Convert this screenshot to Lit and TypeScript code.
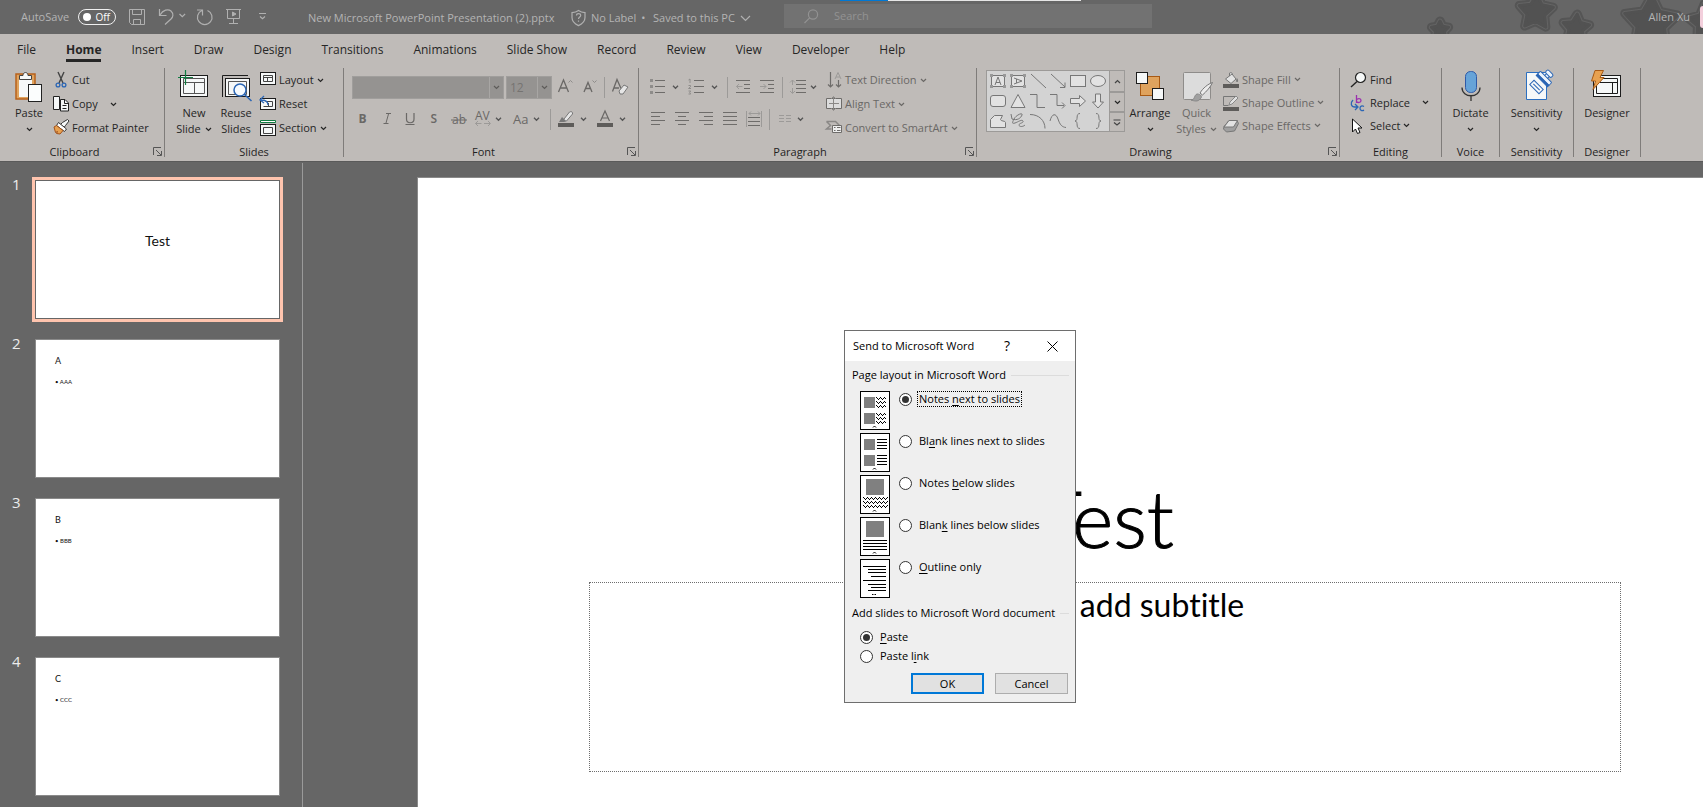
import { LitElement, html, css, svg, type TemplateResult, type SVGTemplateResult } from "lit";
import { customElement, state } from "lit/decorators.js";

/** Icon artwork shares one drawing board; each icon shows its own window of it. */
const art = (x: number, y: number, w: number, h: number, body: SVGTemplateResult): TemplateResult =>
  html`<svg width=${w} height=${h} viewBox="${x} ${y} ${w} ${h}" fill="none" aria-hidden="true">${body}</svg>`;

const chevron = html`<svg class="chev" width="7" height="5" viewBox="0 0 7 5" fill="none" stroke="currentColor" stroke-width="1.2" aria-hidden="true"><path d="M1 1l2.5 2.5L6 1" /></svg>`;

const launcher = html`<svg width="9" height="9" viewBox="0 0 9 9" fill="none" stroke="currentColor" aria-hidden="true"><path d="M.5 8V.5H8M3 3l5 5M8.5 4v4.5H4" /></svg>`;

const chevAt = (x: number, y: number) => svg`<path d="M${x - 2.5} ${y - 1.2}l2.500 2.500 2.500-2.500" stroke="#555" stroke-width="1.300" />`;

const starPoints = (r: number) =>
  Array.from({ length: 10 }, (_, i) => {
    const a = (Math.PI / 5) * i - Math.PI / 2;
    const d = i % 2 ? r * 0.52 : r;
    return `${(d * Math.cos(a)).toFixed(1)},${(d * Math.sin(a)).toFixed(1)}`;
  }).join(" ");

const star = (x: number, y: number, r: number, turn: number) => svg`
  <g transform="translate(${x} ${y}) rotate(${turn})" stroke-linejoin="round" fill="#525252">
    <polygon points=${starPoints(r)} stroke="#555" stroke-width="9" />
    <polygon points=${starPoints(r)} stroke="#646464" stroke-width="5" />
    <polygon points=${starPoints(r)} stroke="#525252" stroke-width="3" />
  </g>`;

const zig = (x: number, y: number, n: number) => {
  let d = `M${x + 0.5} ${y + 0.5}`;
  for (let i = 0; i < n; i++) d += i % 2 ? "l2 -2" : "l2 2";
  return svg`<path d=${d} stroke="#000" shape-rendering="crispEdges" />`;
};
const bar = (x: number, y: number, w: number) => svg`<path d="M${x} ${y + 0.5}h${w}" stroke="#000" />`;
const box = (x: number, y: number, w: number, h: number) => svg`<rect x=${x} y=${y} width=${w} height=${h} fill="#808080" />`;

const sheet = (body: unknown, foot = true) => html`<svg width="30" height="39" viewBox="0 0 30 39" fill="none" aria-hidden="true">
  <rect x=".5" y=".5" width="29" height="38" fill="#fff" stroke="#000" />${body}
  ${foot ? svg`<path d="M13 36.5l1.5-1.5 1.5 1.5" stroke="#000" />` : svg`<path d="M12 35.5h1.5M14.5 35.5h1.5" stroke="#000" />`}</svg>`;

const layouts = [
  { text: ["Notes ", "n", "ext to slides"], pic: sheet(svg`${box(4, 6, 11, 11)}${box(4, 22, 11, 11)}${[6, 10, 14, 22, 26, 30].map((y) => zig(16, y, 5))}`) },
  { text: ["Bl", "a", "nk lines next to slides"], pic: sheet(svg`${box(4, 6, 11, 11)}${box(4, 22, 11, 11)}${[6, 9, 12, 15, 22, 25, 28, 31].map((y) => bar(17, y, 10))}`) },
  { text: ["Notes ", "b", "elow slides"], pic: sheet(svg`${box(6, 4, 18, 16)}${[22, 26, 30].map((y) => zig(3, y, 12))}`) },
  { text: ["Blan", "k", " lines below slides"], pic: sheet(svg`${box(6, 4, 18, 16)}${[23, 26, 29, 32].map((y) => bar(3, y, 24))}`) },
  { text: ["", "O", "utline only"], pic: sheet(svg`${bar(3, 7, 23)}${bar(8, 10, 18)}${bar(8, 13, 18)}${bar(11, 17, 15)}${bar(3, 21, 23)}${bar(8, 25, 18)}${bar(11, 28, 15)}${bar(8, 31, 18)}`, false) },
];

const tabs = ["File", "Home", "Insert", "Draw", "Design", "Transitions", "Animations", "Slide Show", "Record", "Review", "View", "Developer", "Help"];

const slides = [
  { title: "Test", body: "" },
  { title: "A", body: "AAA" },
  { title: "B", body: "BBB" },
  { title: "C", body: "CCC" },
];

const lines = (x: number, ys: number[], ws: number[], anchor: "l" | "c" | "r" = "l") =>
  ys.map((y, i) => {
    const w = ws[i % ws.length];
    const sx = anchor === "l" ? x : anchor === "r" ? x + 14 - w : x + (14 - w) / 2;
    return svg`<path d="M${sx} ${y + 0.5}h${w}" stroke="#6e6c6a" />`;
  });

const rule = (x: number, w: number) => art(x, 108, w, 23, svg`<path d="M${x + Math.floor(w / 2) + 0.5} 109v21" stroke="#9c9a98" />`);

@customElement("app-root")
export class AppRoot extends LitElement {
  @state() private layout = 0;
  @state() private mode = "paste";
  @state() private current = 0;

  static styles = css`
    :host {
      display: flex;
      flex-direction: column;
      height: 100vh;
      overflow: hidden;
      background: #666;
      color: #262626;
      font: 11px/16px "Open Sans", "Noto Sans", sans-serif;
    }
    * { box-sizing: border-box; }
    svg { display: block; flex: none; overflow: visible; }
    button, select, input { font: inherit; color: inherit; margin: 0; }
    button { background: none; border: 0; padding: 0; display: flex; align-items: center; white-space: nowrap; }
    svg text { font-family: "Open Sans", "Noto Sans", sans-serif; }

    .titlebar {
      position: relative;
      flex: none;
      height: 34px;
      display: grid;
      grid-template-columns: 308px 476px 368px 1fr;
      align-items: center;
      color: #b4b4b4;
    }
    .stars { position: absolute; right: 0; top: 0; overflow: hidden; }
    .progress { position: absolute; left: 840px; top: 0; width: 241px; height: 1px; background: #e6e6e6; }
    .progress i { display: block; width: 48px; height: 1px; background: #0078d4; }
    .quick { display: flex; align-items: center; padding-left: 21px; height: 32px; }
    .autosave { display: flex; align-items: center; width: 108px; gap: 6px; }
    .autosave span { width: 51px; }
    .switch {
      width: 38px; height: 16px; border: 1px solid #f0f0f0; border-radius: 8px;
      padding: 0 5px 0 4px; justify-content: space-between; color: #fff; font-size: 10px; line-height: 14px;
    }
    .switch i { width: 8px; height: 8px; border-radius: 50%; background: #fff; }
    .doc { display: flex; align-items: center; padding-top: 2px; }
    .doc .name { width: 263px; }
    .doc .label { width: 62px; gap: 5px; display: flex; }
    .doc button { gap: 5px; }
    .search { display: flex; align-items: center; height: 24px; margin-bottom: 2px; padding-left: 20px; gap: 15px; background: #727272; color: #929292; }
    .search input { flex: 1; min-width: 0; border: 0; background: none; padding: 0; outline: 0; }
    .search input::placeholder { color: #929292; opacity: 1; }
    .user { position: relative; display: flex; justify-content: flex-end; align-items: center; gap: 10px; overflow: hidden; height: 34px; }
    .avatar { width: 3px; height: 22px; background: #f3cfdc; border-radius: 11px 0 0 11px; }

    .ribbon { flex: none; background: #bfbbb8; }
    .tabs { display: flex; gap: 30px; padding: 6px 17px 0; height: 34px; }
    .tabs button { font-size: 12px; line-height: 18px; height: 22px; border-bottom: 3px solid transparent; }
    .tabs .on { font-weight: 700; border-color: #262626; }
    .groups { display: flex; height: 93px; }
    .group { flex: none; height: 89px; border-right: 1px solid #7f7c7a; display: flex; flex-direction: column; }
    .body { display: flex; height: 78px; }
    .foot { display: flex; height: 11px; line-height: 11px; align-items: center; justify-content: center; position: relative; color: #1f1f1f; padding-right: 15px; }
    .foot.plain { padding-right: 0; }
    .foot button { position: absolute; right: 2px; top: 1px; color: #555; }
    .big { flex-direction: column; height: 69px; white-space: nowrap; }
    .big span { display: flex; align-items: center; gap: 4px; height: 16px; }
    .rows { display: flex; flex-direction: column; align-items: flex-start; }
    .rows button { height: 24px; gap: 3px; }
    .rows.tight button { height: 23px; }
    .wide .chev { margin-left: 9px; }
    .dim { color: #6a6866; }
    .strips { display: flex; flex-direction: column; gap: 9px; padding-top: 8px; }
    .strip { display: flex; height: 23px; align-items: center; }
    .combo { display: flex; height: 23px; border: 1px solid #a09e9c; background: #959391; color: #757371; margin-right: 2px; }
    .combo select { appearance: none; border: 0; background: none; padding: 0 3px; flex: 1; min-width: 0; opacity: 1; color: #757371; font-size: 12px; }
    .combo span { width: 14px; border-left: 1px solid #a8a6a4; display: grid; place-items: center; color: #5e5c5a; }
    .face { width: 152px; }
    .size { width: 46px; }
    .gallery { display: flex; margin: 2px 3px 0 9px; border: 1px solid #9c9a98; background: #d3d3d3; height: 62px; }
    .scroll { display: grid; grid-template-rows: 1fr 1fr 1fr; width: 15px; background: #bfbbb8; border-left: 1px solid #9c9a98; }
    .scroll button { justify-content: center; border-top: 2px solid #9c9a98; }
    .scroll button:first-child { border-top: 0; }
    .clip { width: 165px; } .sld { width: 179px; } .fnt { width: 295px; } .par { width: 338px; }
    .drw { width: 363px; } .edt { width: 102px; } .voi { width: 58px; } .sen { width: 74px; } .des { width: 67px; }
    .clip .big { width: 53px; padding-left: 5px; }
    .sld .body { padding-left: 8px; }
    .sld .big { width: 42px; }
    .sld .rows { padding-left: 3px; }
    .fnt .strips { padding-left: 8px; }
    .par .rows { flex: 1; }
    .drw .rows { padding-left: 2px; }
    .arr { width: 44px; } .qst { width: 49px; }
    .edt .rows { padding-left: 11px; }
    .solo .big { width: 100%; }

    .work { flex: 1; min-height: 0; display: flex; border-top: 1px solid #5a5a5a; }
    .panel { flex: none; width: 303px; border-right: 1px solid #9a9a9a; margin-top: 1px; padding: 17px 0 0 12px; overflow: hidden; display: flex; flex-direction: column; gap: 20px; }
    .item { display: flex; align-items: flex-start; color: #ececec; font-size: 15px; line-height: 8px; text-align: left; white-space: normal; flex: none; }
    .item b { width: 23px; font-weight: 400; }
    .thumb { width: 245px; height: 139px; border: 1px solid #8a8a8a; background: #fff; color: #111; display: flex; flex-direction: column; padding: 15px 19px; gap: 9px; font: 9px/12px Lato, "Open Sans", sans-serif; }
    .thumb small { font-size: 6px; line-height: 12px; }
    .item.on .thumb { border-color: #666; outline: 3px solid #ffc4ae; }
    .cover .thumb { align-items: center; font-size: 14px; padding-top: 54px; }
    .stage { flex: 1; min-width: 0; overflow: hidden; padding: 15px 0 0 114px; }
    .slide { width: 1376px; aspect-ratio: 16 / 9; outline: 1px solid #8a8a8a; outline-offset: -1px; background: #fff; color: #000; font-family: Lato, "Open Sans", sans-serif; font-variant-ligatures: none; display: flex; flex-direction: column; align-items: center; }
    .slide h1 { margin: 0; padding-top: 283px; height: 405px; font-size: 79px; font-weight: 300; line-height: 116px; -webkit-text-stroke: 1px #000; }
    .slide p { margin: 0; width: 75%; height: 190px; border: 1px dotted #6e6e6e; font-size: 32px; line-height: 44px; text-align: center; }

    .dialog { position: absolute; left: 844px; top: 330px; width: 232px; height: 373px; background: #efefef; border: 1px solid #6e6e6e; color: #000; display: flex; flex-direction: column; }
    .dialog header { display: flex; align-items: center; height: 30px; padding: 0 17px 0 8px; background: #fff; }
    .dialog header span { flex: 1; }
    .dialog header button { width: 32px; margin-right: 23px; justify-content: center; font-size: 14px; }
    .dialog header .close { width: 12px; margin: 0; }
    fieldset { border: 0; margin: 0; padding: 0; min-width: 0; }
    legend { display: flex; align-items: center; gap: 5px; width: 100%; padding: 0 6px 0 7px; white-space: nowrap; line-height: 16px; }
    legend i { flex: 1; height: 1px; background: #dcdcdc; }
    .pages { margin-top: 6px; }
    .options { display: grid; gap: 3px; padding: 8px 0 0 15px; }
    .option { display: flex; gap: 9px; align-items: flex-start; }
    .option label, .mode { display: flex; align-items: center; gap: 5px; height: 16px; }
    .option label span, .mode span { padding: 0 1px; border: 1px solid transparent; line-height: 14px; white-space: nowrap; }
    .option .focus { border: 1px dotted #000; }
    u { text-underline-offset: 2px; }
    input[type="radio"] { appearance: none; width: 13px; height: 13px; border: 1px solid #333; border-radius: 50%; background: #fff; display: grid; place-items: center; }
    input[type="radio"]:checked::before { content: ""; width: 7px; height: 7px; border-radius: 50%; background: #333; }
    .add { margin-top: 7px; }
    .modes { display: grid; gap: 3px; padding: 8px 0 0 15px; }
    .actions { display: flex; justify-content: flex-end; gap: 11px; padding: 9px 7px 0 0; }
    .actions button { width: 73px; height: 21px; justify-content: center; border: 1px solid #adadad; background: #e1e1e1; }
    .actions .ok { border: 2px solid #0078d7; }
  `;

  private titlebar() {
    const c = "#b0b0b0";
    return html`<header class="titlebar">
      <svg class="stars" width="283" height="34" viewBox="1420 0 283 34" aria-hidden="true">
        ${star(1440, 30, 9, 0)}${star(1536, 12, 18, 3)}${star(1576, 28, 14, 5)}${star(1651, 23, 28, 2)}${star(1706, 22, 18, -6)}
      </svg>
      <div class="progress"><i></i></div>
      <div class="quick">
        <div class="autosave"><span>AutoSave</span><button class="switch" role="switch" aria-checked="false" aria-label="AutoSave"><i></i>Off</button></div>
        <button aria-label="Save">${art(129, 9, 26, 18, svg`<g stroke=${c}><path d="M129.500 10.500h15v15h-13l-2-2zM132.500 10.500v5h9v-5M133.500 25.500v-5h7v5" /></g>`)}</button>
        <button aria-label="Undo">${art(155, 9, 38, 18, svg`<g stroke=${c} stroke-width="1.200"><path d="M159.500 10v6.500h7M160 16c3-5 8-6.500 11-4 3 3 2 6 0 8l-6 5.500M179.500 15l2.800 2.600 2.800-2.600" /></g>`)}</button>
        <button aria-label="Repeat">${art(193, 9, 30, 18, svg`<g stroke=${c} stroke-width="1.200"><path d="M197 11h5.500v5.500M202 11.500a7.300 7.300 0 1 0 5.500 0" /></g>`)}</button>
        <button aria-label="Start slide show">${art(223, 9, 32, 18, svg`<g stroke=${c}><path d="M226 10.500h15M227.500 10.500v9h12v-9M233.500 19.500v5M229 24.500h9" /><path d="M232.500 13l3.500 2-3.500 2z" fill=${c} /></g>`)}</button>
        <button aria-label="Customize toolbar">${art(255, 9, 16, 18, svg`<path d="M259 14.500h7M260 17.500l2.500 2.300 2.500-2.300" stroke=${c} stroke-width="1.200" />`)}</button>
      </div>
      <div class="doc">
        <span class="name">New Microsoft PowerPoint Presentation (2).pptx</span>
        <button>${art(571, 9, 15, 16, svg`<g stroke=${c} stroke-width="1.200"><path d="M578.500 9.600c2 1.500 4 2 6.500 2v5c0 4-3 6.500-6.500 8-3.500-1.500-6.500-4-6.500-8v-5c2.500 0 4.500-.5 6.500-2z" /><path d="M576.500 14.500c0-2.500 4.200-2.500 4.200 0 0 1.600-2.200 1.600-2.200 3.500M578.500 19.500v1.300" /></g>`)}<span class="label">No Label<span>•</span></span></button>
        <button>Saved to this PC<svg width="11" height="7" viewBox="0 0 11 7" fill="none" stroke=${c} stroke-width="1.200"><path d="M1 1l4.500 4.500L10 1" /></svg></button>
      </div>
      <label class="search">${art(804, 9, 15, 15, svg`<g stroke="#929292" stroke-width="1.200"><circle cx="813" cy="14.500" r="4.600" /><path d="M809.700 17.800L804.500 23" /></g>`)}<input type="text" placeholder="Search" aria-label="Search" /></label>
      <div class="user"><span>Allen Xu</span><i class="avatar"></i></div>
    </header>`;
  }

  private clipboard() {
    return html`<section class="group clip">
      <div class="body">
        <button class="big">${art(16, 68, 32, 37, svg`<rect x="19" y="74" width="19" height="25" fill="#dfa35e" stroke="#b8621b" stroke-width="1.500" /><path d="M22 77h13v20h-13z" fill="#f6f8f8" /><path d="M22.500 79.500v-4h3.500c0-4 5-4 5 0h3.500v4z" fill="#f6f8f8" stroke="#444" /><rect x="31.500" y="84.500" width="13" height="17" fill="#fbfdfd" stroke="#222" />`)}
          <span>Paste</span><span>${chevron}</span></button>
        <div class="rows">
          <button>${art(53, 72, 16, 16, svg`<path d="M58 72l5 11M64 72l-5 11" stroke="#444" stroke-width="1.400" /><circle cx="58" cy="85" r="1.900" stroke="#2b66b5" stroke-width="1.300" /><circle cx="64" cy="85" r="1.900" stroke="#2b66b5" stroke-width="1.300" />`)}Cut</button>
          <button class="wide">${art(53, 95, 16, 16, svg`<path d="M53.500 95.500h6v13h-6z" fill="#f6f8f8" stroke="#222" /><path d="M60.500 98.500h4.500l3.500 3.500v8h-8z" fill="#f6f8f8" stroke="#222" /><path d="M64.500 98.500v4h4M62.500 104.500h4M62.500 107.500h4" stroke="#222" />`)}Copy${chevron}</button>
          <button>${art(53, 120, 16, 16, svg`<path d="M60.500 124.500l2-2 5-3 1.500 1.500-3.500 4.500-1.500 2z" fill="#f6f8f8" stroke="#333" /><path d="M58.500 122.500l8 6.500-2 2.500-8-6z" fill="#fff" stroke="#333" /><path d="M54 127l2.500-1.500 6.500 5-3 3.500-3.500-.5 1-2-2 1z" fill="#e8a150" stroke="#a3521a" />`)}Format Painter</button>
        </div>
      </div>
      <div class="foot">Clipboard<button aria-label="Clipboard options">${launcher}</button></div>
    </section>`;
  }

  private slidesGroup() {
    const frame = (x: number, y: number, w: number, h: number) => svg`<rect x=${x} y=${y} width=${w} height=${h} fill="#f6f8f8" stroke="#1c1c1c" />`;
    return html`<section class="group sld">
      <div class="body">
        <button class="big">${art(177, 68, 34, 37, svg`${frame(180.5, 75.5, 27, 21)}<path d="M183.500 78.500h21v15h-21zM183.500 82.500h21M194.500 82.500v11" stroke="#555" /><path d="M178 77.500h15M185.500 70v15" stroke="#107c41" stroke-width="1.200" />`)}
          <span>New</span><span>Slide ${chevron}</span></button>
        <button class="big">${art(220, 68, 32, 37, svg`<path d="M222.500 97V75.500H248" stroke="#1c1c1c" />${frame(225.5, 78.5, 24, 18)}<path d="M228.500 81.500h18v13h-18z" stroke="#555" /><circle cx="240" cy="90" r="6" fill="#f6fbff" stroke="#2b66b5" stroke-width="1.500" /><path d="M244.500 94.500l7 6.500" stroke="#2b66b5" stroke-width="1.600" />`)}
          <span>Reuse</span><span>Slides</span></button>
        <div class="rows">
          <button>${art(260, 72, 16, 16, svg`${frame(260.5, 72.5, 15, 12)}<path d="M263.500 75.500h9v6h-9zM263.500 77.500h9M267.500 77.500v4" stroke="#444" />`)}Layout ${chevron}</button>
          <button>${art(260, 95, 16, 16, svg`${frame(260.5, 97.5, 15, 11)}<path d="M265.500 100.500h7v5h-9M268.500 102v4" stroke="#444" /><path d="M268 104c0-4-3-5-7-5M264 95l-4 4 4 3" stroke="#2b66b5" stroke-width="1.300" />`)}Reset</button>
          <button>${art(260, 119, 16, 16, svg`<path d="M260.500 119.500h15v2h-15z" fill="#fff" stroke="#107c41" />${frame(260.5, 123.5, 15, 11)}<path d="M263.500 126.500h9v6h-9z" stroke="#444" />`)}Section ${chevron}</button>
        </div>
      </div>
      <div class="foot plain">Slides</div>
    </section>`;
  }

  private fontGroup() {
    const g = "#6a6866";
    return html`<section class="group fnt dim">
      <div class="body"><div class="strips">
        <div class="strip">
          <div class="combo face"><select disabled aria-label="Font"><option></option></select><span>${chevron}</span></div>
          <div class="combo size"><select disabled aria-label="Font size"><option>12</option></select><span>${chevron}</span></div>
          <button aria-label="Increase font size">${art(554, 76, 23, 23, svg`<path d="M558.500 92l5-12 5 12M560.500 88h6.500" stroke=${g} stroke-width="1.300" /><path d="M568.500 82.500l2-2 2 2" stroke="#8e8c8a" />`)}</button>
          <button aria-label="Decrease font size">${art(577, 76, 22, 23, svg`<path d="M584 92l4-9.500 4 9.500M585.500 88.500h5" stroke=${g} stroke-width="1.300" /><path d="M592.500 80.500l2 2 2-2" stroke="#8e8c8a" />`)}</button>
          ${art(599, 76, 11, 23, svg`<path d="M604.500 77v21" stroke="#9c9a98" />`)}
          <button aria-label="Clear formatting">${art(610, 76, 20, 23, svg`<path d="M612.500 91.500l4.500-12 4 9M614 88h5" stroke=${g} stroke-width="1.300" /><path d="M619 91l5-6 4 2-5 7-3 0z" fill="#e6e6e6" stroke="#777" />`)}</button>
        </div>
        <div class="strip">
          <button aria-label="Bold">${art(352, 108, 23, 23, svg`<text x="358.500" y="123" font-size="12" font-weight="700" fill=${g}>B</text>`)}</button>
          <button aria-label="Italic">${art(375, 108, 24, 23, svg`<path d="M386 113.500h5M383.500 123.500h5M388.500 114l-2.500 9" stroke=${g} />`)}</button>
          <button aria-label="Underline">${art(399, 108, 24, 23, svg`<path d="M406.500 113v6c0 5 7.500 5 7.500 0v-6M405.500 124.500h9" stroke=${g} stroke-width="1.200" />`)}</button>
          <button aria-label="Shadow">${art(423, 108, 24, 23, svg`<text x="430.500" y="123" font-size="12" font-weight="600" fill=${g}>S</text>`)}</button>
          <button aria-label="Strikethrough">${art(447, 108, 26, 23, svg`<text x="452" y="124" font-size="12" fill=${g}>ab</text><path d="M451 120h16" stroke=${g} />`)}</button>
          <button aria-label="Character spacing">${art(473, 108, 35, 23, svg`<text x="475" y="120" font-size="12" fill=${g}>AV</text><path d="M475.500 123.500h6M484 123.500h6M478 121l-2.500 2.500L478 126M488 121l2.500 2.500L488 126" stroke="#9c9a98" />${chevAt(498.5, 119)}`)}</button>
          <button aria-label="Change case">${art(508, 108, 37, 23, svg`<text x="513" y="124" font-size="13" fill=${g}>Aa</text>${chevAt(536.5, 119)}`)}</button>
          ${rule(545, 11)}
          <button aria-label="Highlight colour">${art(556, 108, 33, 23, svg`<path d="M558 123h16v4h-16z" fill="#5e5c5a" /><path d="M564 119l5.500-7c2-1 3.500 0 3 2l-6 7h-3z" fill="#e6e6e6" stroke="#777" /><path d="M562 117l4 4-2 1h-5z" fill="#777" />${chevAt(583.5, 119)}`)}</button>
          <button aria-label="Font colour">${art(589, 108, 40, 23, svg`<path d="M597 123h16v4h-16z" fill="#5e5c5a" /><path d="M600.500 121l4.500-10 4.500 10M602 118h6" stroke=${g} stroke-width="1.200" />${chevAt(622.5, 119)}`)}</button>
        </div>
      </div></div>
      <div class="foot">Font<button aria-label="Font options">${launcher}</button></div>
    </section>`;
  }

  private paragraph() {
    const s = "#9c9a98";
    return html`<section class="group par">
      <div class="body">
        <div class="strips dim">
          <div class="strip">
            <button aria-label="Bullets">${art(639, 76, 44, 23, svg`<path d="M650 79h3v3h-3zM650 85h3v3h-3zM650 91h3v3h-3z" fill="#8e8c8a" />${lines(655, [80, 86, 92], [10])}${chevAt(675.5, 87)}`)}</button>
            <button aria-label="Numbering">${art(683, 76, 39, 23, svg`<path d="M688.500 80l1.500-1v4M688.500 85.500h2v1.200l-2 1.800h2.500M688.500 91h2.200l-1 1.500 1 1.500h-2.200" stroke="#8e8c8a" />${lines(694, [80, 86, 92], [10])}${chevAt(714.5, 87)}`)}</button>
            ${art(722, 76, 11, 23, svg`<path d="M727.500 77v21" stroke=${s} />`)}
            <button aria-label="Decrease indent">${art(733, 76, 22, 23, svg`${lines(736, [80, 92], [14])}${lines(744, [84, 88], [6])}<path d="M736.500 86.500h6M739 84l-2.500 2.500L739 89" stroke=${s} />`)}</button>
            <button aria-label="Increase indent">${art(755, 76, 22, 23, svg`${lines(760, [80, 92], [14])}${lines(768, [84, 88], [6])}<path d="M760 86.500h6M763.500 84l2.500 2.500-2.500 2.500" stroke=${s} />`)}</button>
            ${art(777, 76, 11, 23, svg`<path d="M782.500 77v21" stroke=${s} />`)}
            <button aria-label="Line spacing">${art(788, 76, 38, 23, svg`${lines(796, [80, 84, 88, 92], [10])}<path d="M792.500 80v5M792.500 88v5M790 82.500l2.500-2.500 2.500 2.500M790 91l2.500 2.500L795 91" stroke=${s} />${chevAt(813.5, 87)}`)}</button>
          </div>
          <div class="strip">
            <button aria-label="Align left">${art(639, 108, 31, 23, svg`${lines(651, [112, 116, 120, 124], [14, 9])}`)}</button>
            <button aria-label="Centre">${art(670, 108, 24, 23, svg`${lines(675, [112, 116, 120, 124], [14, 8], "c")}`)}</button>
            <button aria-label="Align right">${art(694, 108, 24, 23, svg`${lines(699, [112, 116, 120, 124], [14, 9], "r")}`)}</button>
            <button aria-label="Justify">${art(718, 108, 24, 23, svg`${lines(723, [112, 116, 120, 124], [14])}`)}</button>
            <button aria-label="Distribute">${art(742, 108, 22, 23, svg`${lines(748, [117, 121, 125], [12])}<path d="M746.500 111v16M761.500 111v16M749 113.500h11M751 111.500l-2 2 2 2M758 111.500l2 2-2 2" stroke=${s} />`)}</button>
            ${rule(764, 11)}
            <button aria-label="Columns">${art(775, 108, 34, 23, svg`<path d="M779 115.500h5M779 118.500h5M779 121.500h5M786 115.500h5M786 118.500h5M786 121.500h5" stroke=${s} />${chevAt(800.5, 119)}`)}</button>
          </div>
        </div>
        <div class="rows dim">
          <button>${art(826, 71, 16, 17, svg`<path d="M830.500 71v15M828 83.500l2.500 2.500 2.500-2.500M838.500 79v7M836 83.500l2.500 2.500 2.500-2.500" stroke="#6e6c6a" stroke-width="1.200" /><path d="M835 78l3-6.500 3 6.500M836 76h4" stroke="#9c9a98" />`)}Text Direction ${chevron}</button>
          <button>${art(826, 95, 16, 17, svg`<path d="M826.500 97.500h15v10h-15z" fill="#dcdcdc" stroke="#6e6c6a" /><path d="M829 102.500h10M833.500 96v13M831 98l2.500-2.500L836 98M831 107l2.500 2.500L836 107" stroke="#8a8886" />`)}Align Text ${chevron}</button>
          <button>${art(826, 120, 16, 16, svg`<path d="M826.500 121.500h9l4 4M826.500 121.500l4 4-4 3.500h5" stroke="#8a8886" stroke-width="1.500" /><path d="M832.500 125.500h9v7h-9z" fill="#eee" stroke="#6e6c6a" /><path d="M834 127.500h1.500M837 127.500h3.500M834 130.500h1.500M837 130.500h3.500" stroke="#6e6c6a" />`)}Convert to SmartArt ${chevron}</button>
        </div>
      </div>
      <div class="foot">Paragraph<button aria-label="Paragraph options">${launcher}</button></div>
    </section>`;
  }

  private drawing() {
    const shapes = svg`<g stroke="#777" fill="#e2e2e2">
      <rect x="991.500" y="75.500" width="13" height="11" /><rect x="1011.500" y="75.500" width="13" height="11" />
      <path d="M990 74h3v3h-3zM1003 74h3v3h-3zM990 85h3v3h-3zM1003 85h3v3h-3zM1010 74h3v3h-3zM1023 74h3v3h-3zM1010 85h3v3h-3zM1023 85h3v3h-3z" fill="#999" stroke="none" />
      <path d="M995 85l3-8 3 8M996 82.500h4M1014 78l8 3-8 3M1016.500 79v4" fill="none" />
      <path d="M1031 74l15 14M1051 74l14 13M1065 82.500v5h-5" fill="none" />
      <rect x="1070.500" y="75.500" width="15" height="11" /><ellipse cx="1098" cy="81" rx="7.500" ry="5.500" />
      <rect x="990.500" y="95.500" width="15" height="11" rx="2.500" /><path d="M1018 94.500l7 13h-14z" />
      <path d="M1030 94.500h7v13h8M1050 94.500h7v11h7M1062 102.500l3 3-3 3" fill="none" />
      <path d="M1070.500 98.500h9v-3l6 5.500-6 5.500v-3h-9zM1095.500 94v8h-3l5.500 6 5.500-6h-3v-8z" />
      <path d="M990.500 127.500v-8l4-4h8l-2 4c0 2 5 1 5 3v5z" />
      <path d="M1011 114l1 5c5 2 9-1 10-4s-6 0-8 4-2 5 1 4 7-4 8-2-4 2-4 4 4 2 6 0" fill="none" />
      <path d="M1030 114.500c9 0 15 6 15 14M1050 121c2-8 6-8 8-2s4 8 8 8.500M1080 113.500c-5 0-1 7-5 7.500 4 .5 0 7.500 5 7.500M1096 113.500c5 0 1 7 5 7.500-4 .5 0 7.500-5 7.500" fill="none" />
    </g>`;
    return html`<section class="group drw">
      <div class="body">
        <div class="gallery">${art(987, 71, 122, 60, shapes)}
          <div class="scroll">
            <button aria-label="Row up"><svg width="7" height="5" viewBox="0 0 7 5" fill="none" stroke="#444" stroke-width="1.200"><path d="M1 4l2.500-2.500L6 4" /></svg></button>
            <button aria-label="Row down">${chevron}</button>
            <button aria-label="More shapes"><svg width="8" height="7" viewBox="0 0 8 7" fill="none" stroke="#444" stroke-width="1.200"><path d="M.5 1h7M1 3.500l3 2.500 3-2.500" /></svg></button>
          </div>
        </div>
        <button class="big arr">${art(1134, 68, 32, 37, svg`<rect x="1140.500" y="76.500" width="19" height="19" fill="#dfa35e" stroke="#a85a14" /><rect x="1136.500" y="72.500" width="11" height="11" fill="#f6f8f8" stroke="#1c1c1c" /><rect x="1152.500" y="88.500" width="11" height="11" fill="#f6f8f8" stroke="#1c1c1c" />`)}
          <span>Arrange</span><span>${chevron}</span></button>
        <button class="big qst dim">${art(1182, 68, 30, 37, svg`<rect x="1183.500" y="72.500" width="27" height="27" rx="1" fill="#dcdcdc" stroke="#8e8c8a" /><path d="M1200 93c3-5 8-9 12.500-10.500-2 4.500-6 9-10 12.500z" fill="#ececec" stroke="#777" /><path d="M1191 100c4 0 3-5 6-6 4 0 6 3 3 5-2 3-6 2-9 1z" fill="#a0a0a0" stroke="#888" />`)}
          <span>Quick</span><span>Styles ${chevron}</span></button>
        <div class="rows tight dim">
          <button>${art(1223, 70, 16, 16, svg`<path d="M1223 82h16v4h-16z" fill="#5e5c5a" /><path d="M1225.500 77l6.500-5 4 5-5 4.500zM1229.500 74v-3c2-1 3 0 3 2" fill="#e2e2e2" stroke="#777" /><path d="M1237 76c1.500 2 1.500 4 0 4s-1-2 0-4" fill="#777" />`)}Shape Fill ${chevron}</button>
          <button>${art(1223, 93, 16, 16, svg`<path d="M1223 105h16v4h-16z" fill="#5e5c5a" /><path d="M1235 94.500h-11.500v9h5" stroke="#777" /><path d="M1229 103l1-3 6-6 2 2-6 6z" fill="#e2e2e2" stroke="#888" />`)}Shape Outline ${chevron}</button>
          <button>${art(1223, 117, 16, 14, svg`<path d="M1224 124.500l5-6h8l1.500 3-4 7.500-8 1-3-3z" fill="#a0a0a0" stroke="#777" /><path d="M1224 125l5-6.500h8.500l-4 6.500z" fill="#e2e2e2" stroke="#777" />`)}Shape Effects ${chevron}</button>
        </div>
      </div>
      <div class="foot">Drawing<button aria-label="Drawing options">${launcher}</button></div>
    </section>`;
  }

  private tail() {
    return html`<section class="group edt">
        <div class="body"><div class="rows tight">
          <button>${art(1352, 70, 16, 16, svg`<circle cx="1361.500" cy="75.500" r="5" fill="#f6f8f8" stroke="#222" stroke-width="1.200" /><path d="M1358 79.500l-6 5.500" stroke="#222" stroke-width="1.400" />`)}Find</button>
          <button class="wide">${art(1352, 93, 16, 16, svg`<path d="M1357.500 93v8M1357.500 98c1-2 4.500-2 4.500.5s-3.500 2.500-4.500.8" stroke="#9b2fae" stroke-width="1.300" /><path d="M1365 104.500c-2-1.200-4-.2-4 1.800s2 3 4 1.800" stroke="#2b66b5" stroke-width="1.300" /><path d="M1354 98c-3 3-2 7 2 7h2M1356 102l3 3-3 3" stroke="#2b66b5" stroke-width="1.300" />`)}Replace${chevron}</button>
          <button>${art(1352, 116, 16, 16, svg`<path d="M1353.500 117v13l3-3 2 4.500 2.500-1-2-4.500h4z" fill="#fff" stroke="#111" />`)}Select ${chevron}</button>
        </div></div>
        <div class="foot plain">Editing</div>
      </section>
      <section class="group voi solo">
        <div class="body"><button class="big">${art(1460, 68, 22, 37, svg`<rect x="1465.500" y="71.500" width="11" height="21" rx="5" fill="#66a3d8" stroke="#2f5aa8" /><path d="M1462 87.500c0 11 18 11 18 0M1471 96v5" stroke="#333" stroke-width="1.300" />`)}<span>Dictate</span><span>${chevron}</span></button></div>
        <div class="foot plain">Voice</div>
      </section>
      <section class="group sen solo">
        <div class="body"><button class="big">${art(1522, 68, 30, 37, svg`<path d="M1526.500 72.500h20v27h-20z" fill="#f6f8f8" stroke="#2b6fc0" />
          <g transform="translate(1536.500 87) rotate(45)" stroke="#2b66b5"><rect x="-6.500" y="-3" width="13" height="6" /><path d="M-4.500 0h9" /></g>
          <g transform="translate(1544 79) rotate(45)" stroke="#2b66b5" fill="#eef5fc"><rect x="-2" y="-7" width="4" height="5" /><rect x="-4" y="-9.500" width="8" height="4" rx="1.500" /><rect x="-8" y="-3" width="16" height="4.500" rx="1" /><path d="M-8 1h16v2h-16z" fill="#2b66b5" /></g>`)}<span>Sensitivity</span><span>${chevron}</span></button></div>
        <div class="foot plain">Sensitivity</div>
      </section>
      <section class="group des solo">
        <div class="body"><button class="big">${art(1590, 68, 34, 37, svg`<rect x="1593.500" y="75.500" width="27" height="21" fill="#f6f8f8" stroke="#1c1c1c" /><path d="M1596.500 78.500h21v15h-21zM1600 82.500h17M1612.500 82.500v11" stroke="#1c1c1c" /><path d="M1595 70.500h8.500l-3.500 7h4l-11 12 2.500-8.500h-4z" fill="#e8a150" stroke="#a85a14" />`)}<span>Designer</span></button></div>
        <div class="foot plain">Designer</div>
      </section>`;
  }

  private dialog() {
    return html`<div class="dialog" role="dialog" aria-label="Send to Microsoft Word">
      <header><span>Send to Microsoft Word</span><button aria-label="Help">?</button>
        <button class="close" aria-label="Close"><svg width="11" height="11" viewBox="0 0 11 11" stroke="#000"><path d="M.5.5l10 10M10.500.5l-10 10" /></svg></button></header>
      <fieldset class="pages">
        <legend>Page layout in Microsoft Word<i></i></legend>
        <div class="options">${layouts.map(
          (o, i) => html`<div class="option">${o.pic}<label><input type="radio" name="layout" .checked=${this.layout === i} @change=${() => (this.layout = i)} /><span class=${this.layout === i ? "focus" : ""}>${o.text[0]}<u>${o.text[1]}</u>${o.text[2]}</span></label></div>`
        )}</div>
      </fieldset>
      <fieldset class="add">
        <legend>Add slides to Microsoft Word document<i></i></legend>
        <div class="modes">
          <label class="mode"><input type="radio" name="mode" .checked=${this.mode === "paste"} @change=${() => (this.mode = "paste")} /><span><u>P</u>aste</span></label>
          <label class="mode"><input type="radio" name="mode" .checked=${this.mode === "link"} @change=${() => (this.mode = "link")} /><span>Paste l<u>i</u>nk</span></label>
        </div>
      </fieldset>
      <div class="actions"><button class="ok">OK</button><button>Cancel</button></div>
    </div>`;
  }

  render() {
    return html`${this.titlebar()}
      <div class="ribbon">
        <nav class="tabs">${tabs.map((t) => html`<button class=${t === "Home" ? "on" : ""}>${t}</button>`)}</nav>
        <div class="groups">${this.clipboard()}${this.slidesGroup()}${this.fontGroup()}${this.paragraph()}${this.drawing()}${this.tail()}</div>
      </div>
      <main class="work">
        <aside class="panel">${slides.map(
          (s, i) => html`<button class="item ${i === 0 ? "cover" : ""} ${i === this.current ? "on" : ""}" @click=${() => (this.current = i)}><b>${i + 1}</b><span class="thumb"><span>${s.title}</span>${s.body ? html`<small>• ${s.body}</small>` : ""}</span></button>`
        )}</aside>
        <div class="stage"><article class="slide"><h1>Test</h1><p>Click to add subtitle</p></article></div>
      </main>
      ${this.dialog()}`;
  }
}
